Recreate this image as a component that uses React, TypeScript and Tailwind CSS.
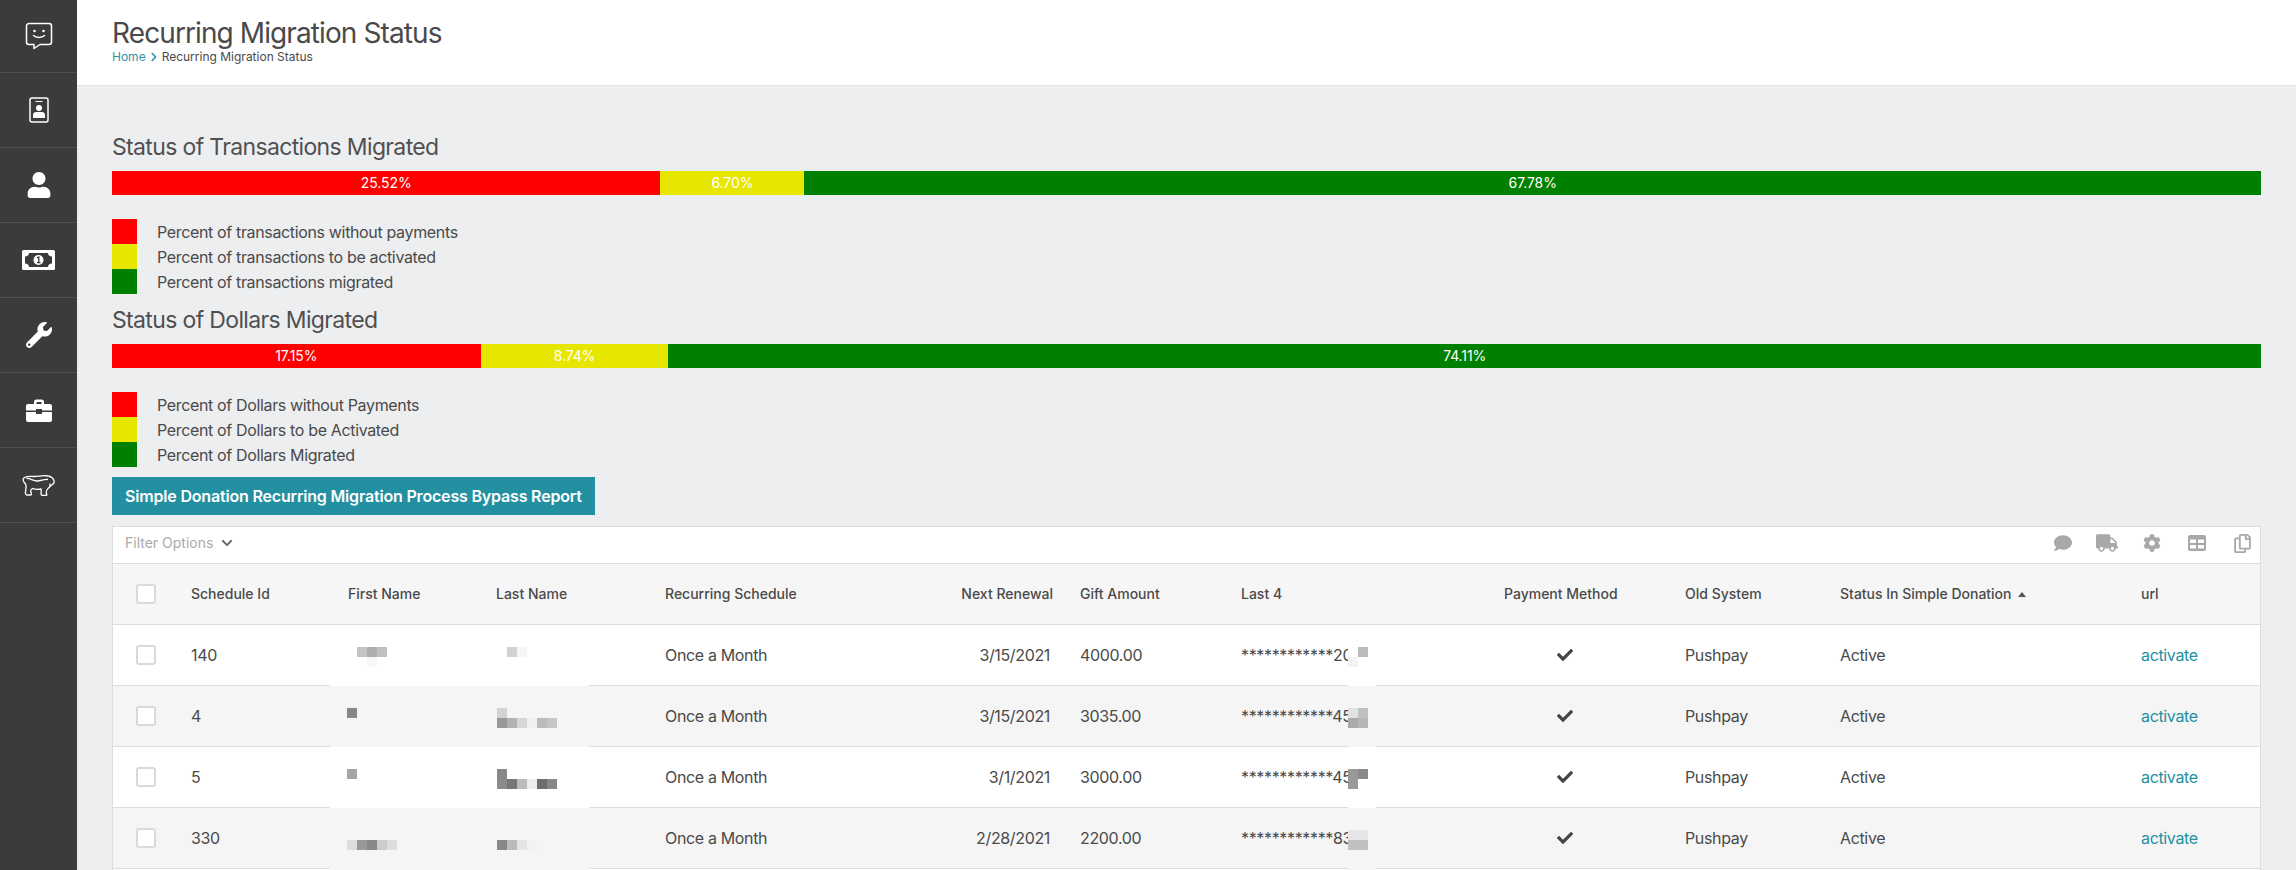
import React from 'react';
import { FaCheck, FaChevronDown, FaChevronRight, FaCog, FaComment, FaRegCopy, FaTruck, FaUser, FaWrench } from 'react-icons/fa';

const rowGrid = 'grid grid-cols-[78px_157px_148px_169px_235px_180px_161px_263px_181px_155px_301px_118px] items-center';

const SmileChat = () => (
  <svg width="28" height="28" viewBox="0 0 28 28" fill="none" stroke="white" strokeWidth="1.5">
    <path d="M4 1.500h20a2.500 2.500 0 0 1 2.500 2.500v16a2.500 2.500 0 0 1-2.500 2.500h-9l-6 4v-4H4A2.500 2.500 0 0 1 1.500 20V4A2.500 2.500 0 0 1 4 1.500z" strokeLinejoin="round" />
    <circle cx="9.500" cy="9" r="1.300" fill="white" stroke="none" />
    <circle cx="18.500" cy="9" r="1.300" fill="white" stroke="none" />
    <path d="M8.500 13.500c2.500 2.500 8.500 2.500 11 0" strokeLinecap="round" />
  </svg>
);

const IdBadge = () => (
  <svg width="20" height="26" viewBox="0 0 20 26" fill="none">
    <rect x="1" y="1" width="18" height="24" rx="2" stroke="white" strokeWidth="1.500" />
    <path d="M6.500 4.500h7" stroke="white" strokeWidth="1" />
    <circle cx="10" cy="11" r="3" fill="white" />
    <path d="M4 21v-3c0-2 1.500-3 3-3h6c1.500 0 3 1 3 3v3z" fill="white" />
  </svg>
);

const MoneyBill = () => (
  <svg width="33" height="20" viewBox="0 0 33 20">
    <rect width="33" height="20" rx="1.500" fill="white" />
    <path d="M7 3h19c0 2 1.500 3.500 4 3.500v7c-2.500 0-4 1.500-4 3.500H7c0-2-1.500-3.500-4-3.500v-7C5.500 6.500 7 5 7 3z" fill="#3b3b3b" />
    <circle cx="16.500" cy="10" r="5" fill="white" />
    <path d="M15 7.800l1.800-.8v5.500M15 12.700h3.500" stroke="#3b3b3b" strokeWidth="1.300" fill="none" />
  </svg>
);

const ToolCase = () => (
  <svg width="26" height="23" viewBox="0 0 26 23" fill="white">
    <path d="M8 5V3a2.500 2.500 0 0 1 2.500-2.500h5A2.500 2.500 0 0 1 18 3v2h-2.500V3h-5v2z" />
    <path d="M2 5h22a2 2 0 0 1 2 2v4.500H16V10h-6v1.500H0V7a2 2 0 0 1 2-2z" />
    <path d="M0 13h10v2h6v-2h10v8a2 2 0 0 1-2 2H2a2 2 0 0 1-2-2z" />
  </svg>
);

const Badger = () => (
  <svg width="33" height="22" viewBox="0 0 33 22" fill="none" stroke="white" strokeWidth="1.300" strokeLinejoin="round" strokeLinecap="round">
    <path d="M32 6.500c-1-2.500-3-4-6-4.500-4-1-9 .5-14 .5-3.500 0-7-.5-9.500 1C1 4.500 .5 6 2 8c1.500 1.500 2.500 3 2 5.500L3.500 18c-.5 1.500.5 3 2 3H9c.5-1 .5-2 0-2.500-.5-1 0-3 1.500-4 3 1 6 1 8.500 .5.5 2 0 3.500 0 4.500 0 1 1 2 2 2h3c1 0 1-1.500 .5-2-.5-1 0-3 1-4.500 1.500-1.500 3-3 6.500-6z" />
    <path d="M5 4.500c3-.5 6 2.500 10 2.500 4 0 7-2 10.500-1.500" />
    <path d="M28 10v2" />
  </svg>
);

const navIcons = [
  { h: 'h-[73px]', icon: <SmileChat /> },
  { h: 'h-[75px]', icon: <IdBadge /> },
  { h: 'h-[75px]', icon: <FaUser className="text-white w-[24px] h-[26px]" /> },
  { h: 'h-[75px]', icon: <MoneyBill /> },
  { h: 'h-[75px]', icon: <FaWrench className="text-white w-[26px] h-[26px]" /> },
  { h: 'h-[75px]', icon: <ToolCase /> },
  { h: 'h-[75px]', icon: <Badger /> },
];

const StatusBar = ({ parts }: { parts: { cls: string; label: string }[] }) => (
  <div className="flex h-6 w-full">
    {parts.map((p) => (
      <div key={p.label} className={`${p.cls} flex items-center justify-center text-sm tracking-[-0.1px] text-white`}>{p.label}</div>
    ))}
  </div>
);

const Legend = ({ items }: { items: string[] }) => {
  const swatches = ['bg-[#ff0000]', 'bg-[#e6e600]', 'bg-[#008000]'];
  return (
    <div className="mt-6 flex flex-col">
      {items.map((t, i) => (
        <div key={t} className="flex h-[25px] items-center">
          <div className={`${swatches[i]} h-[25px] w-[25px]`} />
          <span className="ml-5 text-base tracking-[-0.35px] text-[#4a4a4a]">{t}</span>
        </div>
      ))}
    </div>
  );
};

const headers = ['Schedule Id', 'First Name', 'Last Name', 'Recurring Schedule', 'Next Renewal', 'Gift Amount', 'Last 4', 'Payment Method', 'Old System'];

// blurred out parts of the names and card numbers, [column, row, colour]
type Block = [number, number, string];

const rows: {
  id: string; renewal: string; amount: string; stars: string; alt: boolean;
  first: Block[]; last: Block[]; card: Block[];
}[] = [
  {
    id: '140', renewal: '3/15/2021', amount: '4000.00', stars: '20', alt: false,
    first: [[1, 0, 'bg-[#c4c4c4]'], [2, 0, 'bg-[#adadad]'], [3, 0, 'bg-[#c0c0c0]'], [2, 1, 'bg-[#f8f8f8]']],
    last: [[1, 0, 'bg-[#d2d2d2]'], [2, 0, 'bg-[#f5f5f5]']],
    card: [[1, 0, 'bg-[#bcbcbc]'], [0, 1, 'bg-[#f3f3f3]']],
  },
  {
    id: '4', renewal: '3/15/2021', amount: '3035.00', stars: '45', alt: true,
    first: [[0, 0, 'bg-[#888888]']],
    last: [[0, 0, 'bg-[#d3d3d3]'], [0, 1, 'bg-[#999999]'], [1, 1, 'bg-[#b2b2b2]'], [2, 1, 'bg-[#d6d6d6]'], [3, 1, 'bg-[#efefef]'], [4, 1, 'bg-[#bbbbbb]'], [5, 1, 'bg-[#c6c6c6]']],
    card: [[0, 0, 'bg-[#e2e2e2]'], [1, 0, 'bg-[#c0c0c0]'], [0, 1, 'bg-[#aaaaaa]'], [1, 1, 'bg-[#b6b6b6]']],
  },
  {
    id: '5', renewal: '3/1/2021', amount: '3000.00', stars: '45', alt: false,
    first: [[0, 0, 'bg-[#a5a5a5]']],
    last: [[0, 0, 'bg-[#888888]'], [0, 1, 'bg-[#8b8b8b]'], [1, 1, 'bg-[#777777]'], [2, 1, 'bg-[#bbbbbb]'], [3, 1, 'bg-[#eeeeee]'], [4, 1, 'bg-[#6c6c6c]'], [5, 1, 'bg-[#888888]']],
    card: [[0, 0, 'bg-[#999999]'], [1, 0, 'bg-[#8a8a8a]'], [0, 1, 'bg-[#999999]']],
  },
  {
    id: '330', renewal: '2/28/2021', amount: '2200.00', stars: '83', alt: true,
    first: [[0, 1, 'bg-[#dddddd]'], [1, 1, 'bg-[#999999]'], [2, 1, 'bg-[#888888]'], [3, 1, 'bg-[#cccccc]'], [4, 1, 'bg-[#dddddd]']],
    last: [[0, 1, 'bg-[#888888]'], [1, 1, 'bg-[#bbbbbb]'], [2, 1, 'bg-[#e5e5e5]'], [3, 1, 'bg-[#f2f2f2]']],
    card: [[0, 0, 'bg-[#e5e5e5]'], [1, 0, 'bg-[#e5e5e5]'], [0, 1, 'bg-[#c0c0c0]'], [1, 1, 'bg-[#c0c0c0]']],
  },
];

const Pixels = ({ blocks }: { blocks: Block[] }) => (
  <div className="grid grid-cols-[repeat(6,10px)] grid-rows-[10px_10px]">
    {blocks.map(([col, row, color]) => (
      <div key={`${col}-${row}`} className={color} style={{ gridColumnStart: col + 1, gridRowStart: row + 1 }} />
    ))}
  </div>
);

const Checkbox = () => (
  <div className="ml-[23px] h-5 w-5 rounded-[3px] border-2 border-[#d9d9d9] bg-white" />
);

export default function App() {
  return (
    <div className="flex h-[870px] overflow-hidden bg-[#edeef0] font-['Inter',sans-serif] text-[#4a4a4a]">
      <aside className="flex h-full w-[77px] flex-none flex-col bg-[#3b3b3b]">
        {navIcons.map((n, i) => (
          <div key={i} className={`${n.h} flex flex-none items-center justify-center border-b border-[#4f4f4f]`}>{n.icon}</div>
        ))}
      </aside>

      <main className="min-w-0 flex-1">
        <header className="h-[86px] border-b border-[#e4e4e4] bg-white pl-[35px] pt-[18px]">
          <h1 className="text-[28px] leading-[30px] font-normal tracking-[-0.9px] text-[#4a4a4a]">Recurring Migration Status</h1>
          <div className="mt-[1px] flex items-center text-xs leading-[16px]">
            <span className="text-[#2f93a5]">Home</span>
            <FaChevronRight className="mx-[4px] h-[10px] w-[8px] text-[#3b8fc0]" />
            <span>Recurring Migration Status</span>
          </div>
        </header>

        <div className="px-[35px]">
          <h2 className="mt-[45px] h-[40px] text-[23px] leading-[32px] font-normal tracking-[-0.65px] text-[#505050]">Status of Transactions Migrated</h2>
          <StatusBar
            parts={[
              { cls: 'w-[25.52%] bg-[#ff0000]', label: '25.52%' },
              { cls: 'w-[6.70%] bg-[#e6e600]', label: '6.70%' },
              { cls: 'w-[67.78%] bg-[#008000]', label: '67.78%' },
            ]}
          />
          <Legend items={['Percent of transactions without payments', 'Percent of transactions to be activated', 'Percent of transactions migrated']} />

          <h2 className="mt-[10px] h-[40px] text-[23px] leading-[32px] font-normal tracking-[-0.65px] text-[#505050]">Status of Dollars Migrated</h2>
          <StatusBar
            parts={[
              { cls: 'w-[17.15%] bg-[#ff0000]', label: '17.15%' },
              { cls: 'w-[8.74%] bg-[#e6e600]', label: '8.74%' },
              { cls: 'w-[74.11%] bg-[#008000]', label: '74.11%' },
            ]}
          />
          <Legend items={['Percent of Dollars without Payments', 'Percent of Dollars to be Activated', 'Percent of Dollars Migrated']} />

          <button className="mt-[10px] flex h-[38px] items-center bg-[#2390a1] px-[13px] text-base font-semibold tracking-[-0.18px] text-white">
            Simple Donation Recurring Migration Process Bypass Report
          </button>

          <div className="mt-[11px] border border-[#dddddd] bg-white">
            <div className="flex h-[37px] items-center justify-between border-b border-[#dddddd] pb-[4px] pl-3 pr-[9px]">
              <div className="flex items-center text-sm text-[#aaaaaa]">
                Filter Options
                <FaChevronDown className="ml-2 h-3 w-3 text-[#666666]" />
              </div>
              <div className="flex items-center text-[#a8a8a8]">
                <FaComment className="mr-[24px] h-[18px] w-[18px]" />
                <FaTruck className="mr-[25px] h-[18px] w-[22px]" />
                <FaCog className="mr-[27px] h-[18px] w-[18px]" />
                <svg className="mr-[28px]" width="18" height="16" viewBox="0 0 18 16" fill="#a8a8a8">
                  <path d="M2 0h14a2 2 0 0 1 2 2v12a2 2 0 0 1-2 2H2a2 2 0 0 1-2-2V2a2 2 0 0 1 2-2zm0 4.500v3.500h6V4.500zm8 0v3.500h6V4.500zM2 10v3.500h6V10zm8 0v3.500h6V10z" fillRule="evenodd" />
                </svg>
                <FaRegCopy className="h-[19px] w-[17px]" />
              </div>
            </div>

            <div className={`${rowGrid} h-[61px] border-b border-[#dddddd] bg-[#f6f6f6] text-sm font-medium`}>
              <Checkbox />
              {headers.map((h) => (
                <div key={h} className={h === 'Next Renewal' ? 'pr-[27px] text-right' : ''}>{h}</div>
              ))}
              <div className="flex items-center">
                Status In Simple Donation
                <span className="ml-[6px] h-0 w-0 border-x-[4px] border-b-[5px] border-x-transparent border-b-[#555555]" />
              </div>
              <div>url</div>
            </div>

            {rows.map((r) => (
              <div key={r.id} className={`${rowGrid} relative h-[61px] border-b border-[#dddddd] text-base tracking-[-0.35px] ${r.alt ? 'bg-[#f5f5f5]' : 'bg-white'}`}>
                <Checkbox />
                <div>{r.id}</div>
                <div />
                <div />
                <div>Once a Month</div>
                <div className="pr-[30px] text-right">{r.renewal}</div>
                <div>{r.amount}</div>
                <div>{'************' + r.stars}</div>
                <div className="pl-[53px]"><FaCheck className="h-4 w-4 text-[#444444]" /></div>
                <div>Pushpay</div>
                <div>Active</div>
                <div className="text-[#2390a1]">activate</div>

                {/* redaction patches, they run over the row border */}
                <div className={`absolute left-[217px] top-0 h-[62px] w-[259px] ${r.alt ? 'bg-[#f5f5f5]' : 'bg-white'}`}>
                  <div className="absolute left-[17px] top-[22px]"><Pixels blocks={r.first} /></div>
                  <div className="absolute left-[167px] top-[22px]"><Pixels blocks={r.last} /></div>
                </div>
                <div className={`absolute left-[1235px] top-0 h-[62px] w-7 ${r.alt ? 'bg-[#f5f5f5]' : 'bg-white'}`}>
                  <div className="absolute left-0 top-[22px]"><Pixels blocks={r.card} /></div>
                </div>
              </div>
            ))}
            <div className="h-[61px] bg-white" />
          </div>
        </div>
      </main>
    </div>
  );
}
